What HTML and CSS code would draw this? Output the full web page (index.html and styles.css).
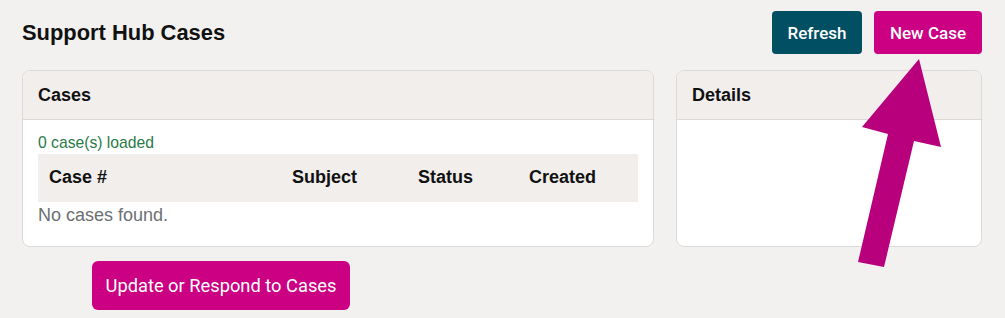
FILE: index.html
```html
<!DOCTYPE html>
<html lang="en">

<head>
    <meta charset="UTF-8">
    <meta name="viewport" content="width=device-width, initial-scale=1.0">
    <title>Support Hub Cases</title>
    <link rel="stylesheet" href="styles.css">
</head>

<body>
    <div id="main">
        <div class="top-bar">
            <h1 class="page-title">Support Hub Cases</h1>
            <div class="actions">
                <button class="btn btn-dark">Refresh</button>
                <button class="btn btn-pink">New Case</button>
            </div>
        </div>
        <div class="panels">
            <div class="card card-cases">
                <div class="card-head">Cases</div>
                <div class="card-body">
                    <div class="loaded">0 case(s) loaded</div>
                    <table class="case-table">
                        <thead>
                            <tr>
                                <th class="col-num">Case #</th>
                                <th class="col-subject">Subject</th>
                                <th class="col-status">Status</th>
                                <th class="col-created">Created</th>
                            </tr>
                        </thead>
                    </table>
                    <div class="empty">No cases found.</div>
                </div>
            </div>
            <div class="card card-details">
                <div class="card-head">Details</div>
                <div class="card-body"></div>
            </div>
        </div>
        <button class="btn btn-pink btn-big">Update or Respond to Cases</button>
    </div>
    <svg class="pointer" width="1005" height="318" viewBox="0 0 1005 318">
        <polygon points="919,59 941,147 914,141 884,267 858,262 888,134 862,127" fill="#b9007c" />
    </svg>
</body>

</html>
```

FILE: styles.css
```css
body,
html {
    padding: 0;
    margin: 0;
}

body {
    position: relative;
    width: 1005px;
    height: 318px;
    overflow: hidden;
    background: #f3f1ef;
    font-family: "Liberation Sans", Arial, sans-serif;
    color: #111;
}

#main {
    padding: 11px 23px 0 22px;
}

.top-bar {
    display: flex;
    justify-content: space-between;
    align-items: center;
    height: 43px;
}

.page-title {
    margin: 0;
    font-size: 21.9px;
    font-weight: bold;
}

.actions {
    display: flex;
    gap: 12px;
}

.btn {
    font-family: Roboto, "Liberation Sans", sans-serif;
    font-size: 17px;
    font-weight: 500;
    color: #fff;
    border: none;
    border-radius: 4px;
    height: 43px;
    padding: 0 15px;
    white-space: nowrap;
    cursor: pointer;
}

.btn-dark {
    background: #004f63;
    width: 90px;
}

.btn-pink {
    background: #cc0082;
    width: 108px;
}

.btn-big {
    display: block;
    width: 258px;
    height: 49px;
    padding: 0;
    margin: 14px 0 0 70px;
    font-size: 18.3px;
    font-weight: 400;
    border-radius: 6px;
}

.panels {
    display: flex;
    gap: 22px;
    margin-top: 16px;
}

.card {
    background: #fff;
    border: 1px solid #dcdad8;
    border-radius: 8px;
    overflow: hidden;
}

.card-cases {
    width: 630px;
}

.card-details {
    width: 304px;
}

.card-head {
    height: 48px;
    line-height: 48px;
    padding: 0 15px;
    background: #f1eeec;
    border-bottom: 1px solid #dcdad8;
    font-size: 18px;
    font-weight: bold;
}

.card-body {
    padding: 12px 15px 18px;
}

.loaded {
    font-size: 15.7px;
    line-height: 22px;
    color: #2a7a48;
}

.case-table {
    width: 600px;
    border-collapse: collapse;
    table-layout: fixed;
}

.case-table th {
    box-sizing: border-box;
    height: 48px;
    padding: 0 11px 2px;
    text-align: left;
    font-size: 18px;
    font-weight: bold;
    background: #f1eeec;
}

.col-num {
    width: 243px;
}

.col-subject {
    width: 126px;
}

.col-status {
    width: 111px;
}

.empty {
    font-size: 18px;
    line-height: 26px;
    color: #6c7074;
}

.pointer {
    position: absolute;
    top: 0;
    left: 0;
    pointer-events: none;
}
```
